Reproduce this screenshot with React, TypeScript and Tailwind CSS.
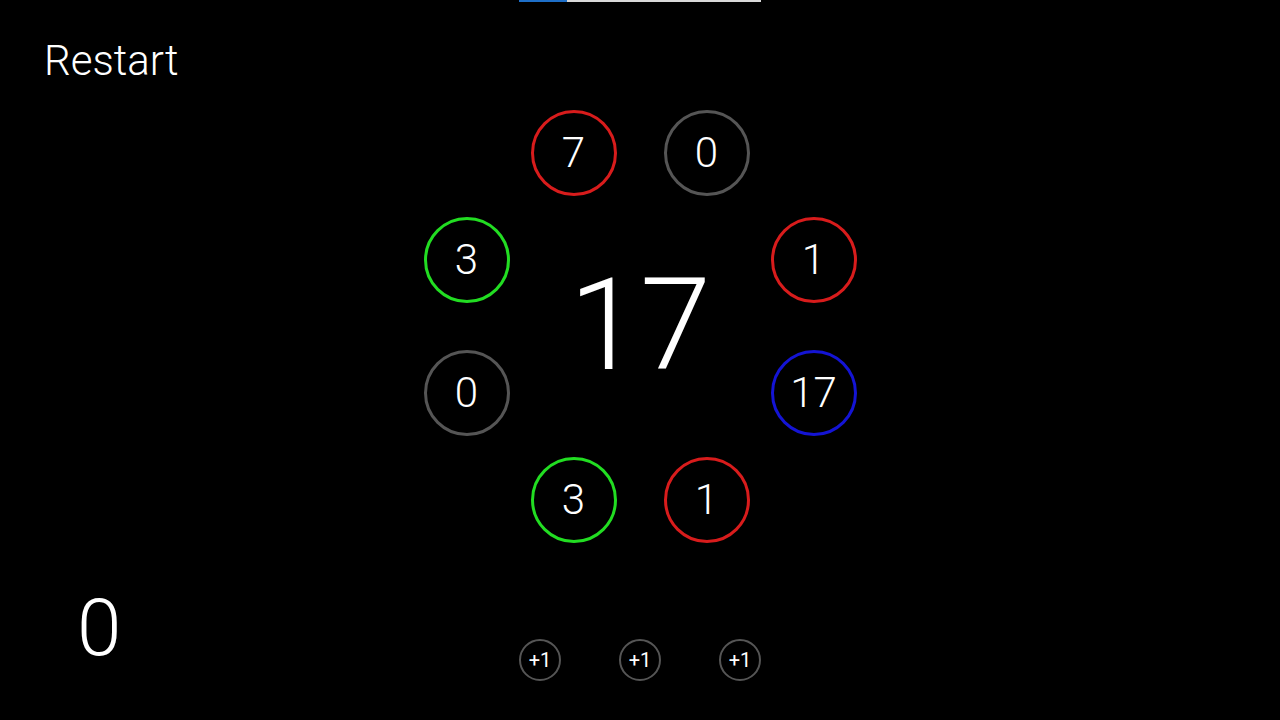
import React from "react";

const ring: { v: string; c: string; col: string; row: string }[] = [
  { v: "7", c: "border-[#d81c1c]", col: "col-start-3", row: "row-start-1" },
  { v: "0", c: "border-[#555555]", col: "col-start-5", row: "row-start-1" },
  { v: "3", c: "border-[#22dd22]", col: "col-start-1", row: "row-start-3" },
  { v: "1", c: "border-[#d81c1c]", col: "col-start-7", row: "row-start-3" },
  { v: "0", c: "border-[#555555]", col: "col-start-1", row: "row-start-5" },
  { v: "17", c: "border-[#1414d4]", col: "col-start-7", row: "row-start-5" },
  { v: "3", c: "border-[#22dd22]", col: "col-start-3", row: "row-start-7" },
  { v: "1", c: "border-[#d81c1c]", col: "col-start-5", row: "row-start-7" },
];

export default function App() {
  return (
    <div
      className="w-[1280px] h-[720px] bg-black text-white relative overflow-hidden flex flex-col"
      style={{ fontFamily: "Roboto, 'Noto Sans', sans-serif" }}
    >
      <div className="flex justify-center">
        <div className="w-[242px] h-[2px] bg-[#d9d9d9] flex">
          <div className="w-[48px] h-full bg-[#1e6fc8]" />
        </div>
      </div>
      <div className="flex h-[718px]">
        <div className="w-[200px] flex flex-col justify-between pl-[44px] pt-[35px] pb-[52px]">
          <div className="text-[42px] font-light leading-[48px]">Restart</div>
          <div className="text-[80px] font-light leading-[80px] pl-[33px]">0</div>
        </div>
        <div className="flex-1 flex flex-col items-center pr-[200px]">
          <div className="mt-[108px] grid grid-cols-[86px_21px_86px_47px_86px_21px_86px] grid-rows-[86px_21px_86px_47px_86px_21px_86px]">
            {ring.map((r, i) => (
              <div
                key={i}
                className={`${r.col} ${r.row} w-[86px] h-[86px] rounded-full border-[3px] ${r.c} flex items-center justify-center text-[42px] font-light leading-none`}
              >
                {r.v}
              </div>
            ))}
            <div className="col-start-3 col-span-3 row-start-3 row-span-3 flex items-center justify-center text-[128px] font-light leading-none pb-[3px]">
              17
            </div>
          </div>
          <div className="mt-[96px] flex gap-[58px]">
            {[0, 1, 2].map((i) => (
              <div
                key={i}
                className="w-[42px] h-[42px] rounded-full border-2 border-[#555555] flex items-center justify-center text-[20px] font-normal leading-none"
              >
                +1
              </div>
            ))}
          </div>
        </div>
      </div>
    </div>
  );
}
